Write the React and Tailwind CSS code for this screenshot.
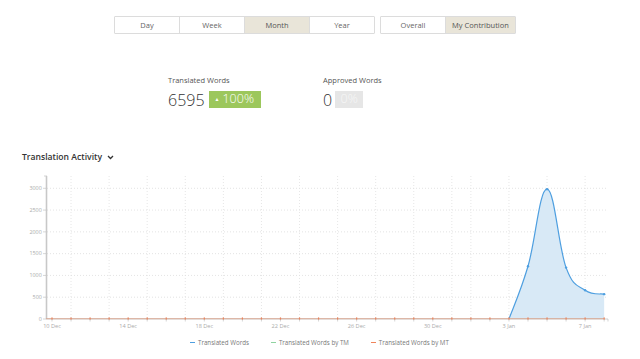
import React from "react";

const font = { fontFamily: '"Open Sans", "Liberation Sans", sans-serif' };

const DAY0 = 52;
const DAYW = 19.04;
const dx = (d) => DAY0 + d * DAYW;
const Y0 = 318;
const PER = 0.04357; // px per word
const vy = (v) => Y0 - v * PER;

const labels = ["10 Dec", "14 Dec", "18 Dec", "22 Dec", "26 Dec", "30 Dec", "3 Jan", "7 Jan"];
const gridDays = [1, 3, 5, 7, 9, 11, 13, 15, 17, 19, 21, 22, 24, 26, 28];
const yTicks = [0, 500, 1000, 1500, 2000, 2500, 3000];

const series = [
  [24, 0],
  [25, 1210],
  [26, 2980],
  [27, 1180],
  [28, 660],
  [29, 570],
];

function smoothPath(pts) {
  let d = `M${pts[0][0]},${pts[0][1]}`;
  for (let i = 0; i < pts.length - 1; i++) {
    const p0 = pts[i - 1] || pts[i];
    const p1 = pts[i];
    const p2 = pts[i + 1];
    const p3 = pts[i + 2] || p2;
    const t = 0.2;
    const c1 = [p1[0] + (p2[0] - p0[0]) * t, p1[1] + (p2[1] - p0[1]) * t];
    const c2 = [p2[0] - (p3[0] - p1[0]) * t, p2[1] - (p3[1] - p1[1]) * t];
    d += ` C${c1[0]},${c1[1]} ${c2[0]},${c2[1]} ${p2[0]},${p2[1]}`;
  }
  return d;
}

function Chart() {
  const pts = series.map(([d, v]) => [dx(d), vy(v)]);
  const line = smoothPath(pts);
  const area = `${line} L${dx(29)},${Y0} L${dx(24)},${Y0} Z`;
  const days = Array.from({ length: 30 }, (_, i) => i);

  return (
    <svg width="640" height="162" viewBox="0 168 640 162" className="block">
      {yTicks.slice(1).map((v) => (
        <line key={v} x1="47" x2="608" y1={vy(v)} y2={vy(v)} stroke="#dcdcdc" strokeWidth="0.8" strokeDasharray="1 2" />
      ))}
      {gridDays.map((d) => (
        <line key={d} x1={dx(d)} x2={dx(d)} y1="175" y2={Y0} stroke="#e0e0e0" strokeWidth="0.8" strokeDasharray="1 2" />
      ))}
      <path d={area} fill="#d8e9f6" />
      <path d={line} fill="none" stroke="#4e9fe0" strokeWidth="1.2" />
      {pts.slice(1).map(([x, y], i) => (
        <circle key={i} cx={x} cy={y} r="1.2" fill="#4e9fe0" />
      ))}
      <line x1="46.5" x2="46.5" y1="175" y2={Y0} stroke="#c8c8c8" strokeWidth="1.6" />
      <line x1="44" x2="47" y1="175" y2="175" stroke="#c8c8c8" strokeWidth="0.8" />
      {yTicks.map((v) => (
        <g key={v}>
          <line x1="43" x2="46" y1={vy(v)} y2={vy(v)} stroke="#bbb" strokeWidth="0.6" />
          <text x="41.8" y={vy(v) + 1.8} textAnchor="end" fontSize="5.4" fill="#aaa" style={font}>
            {v}
          </text>
        </g>
      ))}
      <line x1="46" x2="608" y1={Y0} y2={Y0} stroke="#cfcfcf" strokeWidth="1" />
      <line x1="46" x2={dx(29)} y1={Y0 - 0.3} y2={Y0 - 0.3} stroke="#d9a58f" strokeWidth="0.9" />
      {days.map((d) => (
        <g key={d}>
          <line x1={dx(d)} x2={dx(d)} y1={Y0} y2={Y0 + 2.5} stroke="#bbb" strokeWidth="0.6" />
          <rect x={dx(d) - 0.6} y={Y0 - 1.6} width="1.2" height="2.2" fill="#e8855f" />
        </g>
      ))}
      <line x1="608" x2="608" y1={Y0} y2={Y0 + 2.5} stroke="#bbb" strokeWidth="0.6" />
      {labels.map((l, i) => (
        <text key={l} x={dx(i * 4)} y="326.5" textAnchor="middle" fontSize="5.6" fill="#aaa" style={font}>
          {l}
        </text>
      ))}
    </svg>
  );
}

function Btn({ label, active, w }) {
  return (
    <div
      className={`flex h-[17px] items-center justify-center border-r border-[#dcdcdc] last:border-r-0 text-[7.5px] ${
        active ? "bg-[#e9e5d9] text-[#555]" : "bg-white text-[#666]"
      }`}
      style={{ width: w }}
    >
      {label}
    </div>
  );
}

export default function App() {
  return (
    <div className="w-[640px] h-[359px] bg-white overflow-hidden" style={font}>
      <div className="flex pl-[114px] pt-[16px] gap-[5px]">
        <div className="flex border border-[#dcdcdc] h-[18px] rounded-[1px] overflow-hidden">
          <Btn label="Day" w={65} />
          <Btn label="Week" w={65} />
          <Btn label="Month" w={65} active />
          <Btn label="Year" w={64} />
        </div>
        <div className="flex border border-[#dcdcdc] h-[18px] rounded-[1px] overflow-hidden">
          <Btn label="Overall" w={65} />
          <Btn label="My Contribution" w={69} active />
        </div>
      </div>

      <div className="flex pl-[168px] mt-[41px]">
        <div className="w-[155px]">
          <div className="text-[7.5px] leading-[10px] text-[#555]">Translated Words</div>
          <div className="flex items-center mt-[6px] h-[17px]">
            <span className="text-[16px] font-light text-[#333] leading-none">6595</span>
            <span className="ml-[4px] flex h-[17px] w-[52px] items-center bg-[#9cc75c] text-white">
              <span className="ml-[6px] text-[5px]">▲</span>
              <span className="ml-[3px] text-[12.5px] font-light leading-none">100%</span>
            </span>
          </div>
        </div>
        <div>
          <div className="text-[7.5px] leading-[10px] text-[#555]">Approved Words</div>
          <div className="flex items-center mt-[6px] h-[17px]">
            <span className="text-[16px] font-light text-[#333] leading-none">0</span>
            <span className="ml-[3px] flex h-[17px] w-[28px] items-center justify-center bg-[#e6e6e6] text-[#f7f7f7]">
              <span className="text-[12.5px] font-light leading-none">0%</span>
            </span>
          </div>
        </div>
      </div>

      <div className="flex items-center pl-[22px] mt-[42px] h-[14px]">
        <span className="text-[8.6px] font-semibold text-[#333]">Translation Activity</span>
        <svg width="7" height="5" viewBox="0 0 7 5" className="ml-[5px]">
          <path d="M1 1 L3.5 3.5 L6 1" fill="none" stroke="#333" strokeWidth="1.3" />
        </svg>
      </div>

      <div className="mt-[5px]">
        <Chart />
      </div>

      <div className="flex items-center gap-[22px] mt-[7px] pl-[190px] text-[6.2px] text-[#777]">
        <div className="flex items-center gap-[3px]">
          <span className="block w-[5px] h-[1.5px] bg-[#4e9fe0]" />
          <span>Translated Words</span>
        </div>
        <div className="flex items-center gap-[3px]">
          <span className="block w-[5px] h-[1.5px] bg-[#8fd3a0]" />
          <span>Translated Words by TM</span>
        </div>
        <div className="flex items-center gap-[3px]">
          <span className="block w-[5px] h-[1.5px] bg-[#f0845a]" />
          <span>Translated Words by MT</span>
        </div>
      </div>
    </div>
  );
}
